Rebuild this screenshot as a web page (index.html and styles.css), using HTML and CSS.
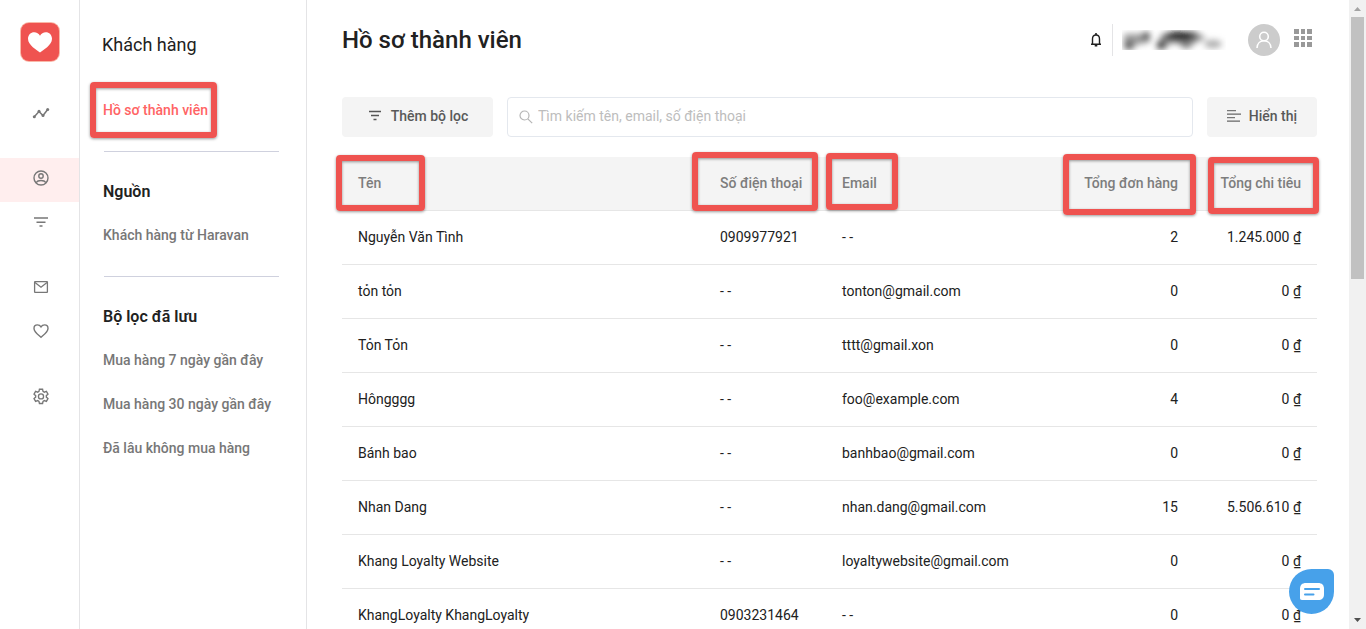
FILE: index.html
```html
<!DOCTYPE html>
<html lang="vi">
<head>
<meta charset="utf-8">
<title>Hồ sơ thành viên</title>
<link rel="stylesheet" href="styles.css">
</head>
<body>
<div class="app">
  <nav class="rail" aria-label="Ứng dụng">
    <a class="logo" href="#" aria-label="Trang chủ">
      <svg width="24" height="21" viewBox="0 0 24 21"><path d="M12 20.500C9 18 0 13.500 0 6.800 0 3 2.800.3 6.200.3c2.400 0 4.700 1.300 5.800 3.500C13.100 1.600 15.400.3 17.800.3 21.200.3 24 3 24 6.800c0 6.700-9 11.200-12 13.700z" fill="#fff"/></svg>
    </a>
    <a class="rail-item" href="#" aria-label="Tổng quan">
      <svg width="18" height="18" viewBox="0 0 18 18" fill="none" stroke="#777" stroke-width="1.500"><path d="M2.500 12.500 7 7.500l4 4 4.700-6"/><g fill="#777" stroke="none"><circle cx="2.300" cy="12.700" r="1.500"/><circle cx="7" cy="7.200" r="1.500"/><circle cx="11" cy="11.500" r="1.500"/><circle cx="15.700" cy="5.500" r="1.500"/></g></svg>
    </a>
    <a class="rail-item active gap" href="#" aria-label="Khách hàng">
      <svg width="18" height="18" viewBox="0 0 18 18" fill="none" stroke="#777" stroke-width="1.400"><circle cx="9" cy="9" r="7"/><circle cx="9" cy="7" r="2.200"/><path d="M4 13.700c1.200-1.700 3-2.200 5-2.200s3.800.5 5 2.200"/></svg>
    </a>
    <a class="rail-item" href="#" aria-label="Bộ lọc">
      <svg width="18" height="18" viewBox="0 0 18 18" stroke="#777" stroke-width="1.400"><path d="M2 5h14M4.500 9.200h9M7.500 13h3"/></svg>
    </a>
    <a class="rail-item gap" href="#" aria-label="Tin nhắn">
      <svg width="18" height="18" viewBox="0 0 18 18" fill="none" stroke="#777" stroke-width="1.300"><rect x="2.600" y="3.600" width="12.800" height="10.800" rx=".5"/><path d="m3 4.500 6 4.700 6-4.700"/></svg>
    </a>
    <a class="rail-item" href="#" aria-label="Yêu thích">
      <svg width="18" height="18" viewBox="0 0 18 18" fill="none" stroke="#777" stroke-width="1.400"><path d="M9 15.300C5.500 12.200 2 9.700 2 6.400 2 4.300 3.600 2.900 5.400 2.900c1.500 0 2.800.7 3.600 2 .8-1.300 2.100-2 3.600-2C14.400 2.900 16 4.300 16 6.400c0 3.300-3.500 5.800-7 8.900z"/></svg>
    </a>
    <a class="rail-item gap" href="#" aria-label="Cài đặt">
      <svg width="18" height="18" viewBox="0 0 24 24" fill="none" stroke="#777" stroke-width="1.800"><path d="M9.900 3h4.200l.6 2.900 1.700 1 2.800-1 2.100 3.700-2.200 1.900v2l2.200 1.900-2.100 3.700-2.800-1-1.700 1-.6 2.900H9.900l-.6-2.900-1.700-1-2.800 1-2.100-3.700 2.200-1.900v-2L2.700 9.600l2.100-3.700 2.800 1 1.700-1z"/><circle cx="12" cy="12.500" r="3.400"/></svg>
    </a>
  </nav>

  <nav class="subnav" aria-label="Khách hàng">
    <h2 class="subnav-title">Khách hàng</h2>
    <a class="subnav-link current" href="#">Hồ sơ thành viên<span class="mark mark-nav"></span></a>
    <hr class="rule">
    <h3 class="subnav-heading">Nguồn</h3>
    <a class="subnav-link" href="#">Khách hàng từ Haravan</a>
    <hr class="rule">
    <h3 class="subnav-heading">Bộ lọc đã lưu</h3>
    <a class="subnav-link" href="#">Mua hàng 7 ngày gần đây</a>
    <a class="subnav-link" href="#">Mua hàng 30 ngày gần đây</a>
    <a class="subnav-link" href="#">Đã lâu không mua hàng</a>
  </nav>

  <main class="main">
    <header class="topbar">
      <h1 class="page-title">Hồ sơ thành viên</h1>
      <div class="account">
        <button class="icon-button bell" type="button" aria-label="Thông báo">
          <svg width="12" height="14" viewBox="0 0 12 14"><path d="M1 11.200h10M2.500 11V6c0-2.500 1.300-4 3.500-4s3.500 1.500 3.500 4v5" fill="none" stroke="#212121" stroke-width="1.400"/><path d="M5.200 0h1.600v2H5.200zM4.700 12h2.600v1.500H4.700z" fill="#212121"/></svg>
        </button>
        <div class="user-name">
          <svg width="104" height="20" viewBox="0 0 104 20" aria-hidden="true"><defs><filter id="soft" x="-20%" y="-50%" width="140%" height="200%"><feGaussianBlur stdDeviation="3"/></filter></defs><g filter="url(#soft)"><path d="M2 4h26v8l-14 3-4 5H2z" fill="#999"/><circle cx="7" cy="15" r="4" fill="#555"/><circle cx="24" cy="6" r="4" fill="#555"/><path d="M34 18 40 4l32-3 12 7-10 4-8 7-9-5-8-1-8 7z" fill="#888"/><ellipse cx="58" cy="6" rx="16" ry="4" fill="#000"/><circle cx="39" cy="15" r="4" fill="#333"/><circle cx="63" cy="14" r="4" fill="#777"/><ellipse cx="91" cy="14" rx="9" ry="4" fill="#aaa"/></g></svg>
        </div>
        <button class="avatar" type="button" aria-label="Tài khoản">
          <svg width="18" height="18" viewBox="0 0 18 18" fill="none" stroke="#fff" stroke-width="1.600"><circle cx="9" cy="5.500" r="4.300"/><path d="M2 17c.2-4.400 3-7.200 7-7.200s6.800 2.800 7 7.200"/></svg>
        </button>
        <button class="icon-button apps" type="button" aria-label="Ứng dụng khác">
          <svg width="18" height="18" viewBox="0 0 18 18" fill="#999"><path d="M0 0h5v5H0zM7 0h4v5H7zM13 0h5v5h-5zM0 7h5v4H0zM7 7h4v4H7zM13 7h5v4h-5zM0 13h5v5H0zM7 13h4v5H7zM13 13h5v5h-5z"/></svg>
        </button>
      </div>
    </header>

    <div class="toolbar">
      <button class="button button-filter" type="button">
        <svg width="16" height="14" viewBox="0 0 16 14" stroke="#555" stroke-width="1.300"><path d="M2 2.500h12M4 6.500h8M6.500 10.500h3"/></svg>
        Thêm bộ lọc
      </button>
      <label class="search">
        <svg width="14" height="14" viewBox="0 0 14 14" fill="none" stroke="#b5b5b5" stroke-width="1.200"><circle cx="5.500" cy="5.500" r="4.500"/><path d="m8.800 8.800 4.400 4.400"/></svg>
        <input class="search-input" type="text" placeholder="Tìm kiếm tên, email, số điện thoại" aria-label="Tìm kiếm">
      </label>
      <button class="button button-view" type="button">
        <svg width="14" height="12" viewBox="0 0 14 12" stroke-width="1.300"><path d="M0 .7h9M0 7.700h8" stroke="#777"/><path d="M0 4.200h14M0 11.200h13" stroke="#666"/></svg>
        Hiển thị
      </button>
    </div>

    <table class="members">
      <thead>
        <tr>
          <th class="name">Tên<span class="mark mark-name"></span></th>
          <th class="phone">Số điện thoại<span class="mark mark-phone"></span></th>
          <th class="email">Email<span class="mark mark-email"></span></th>
          <th class="orders">Tổng đơn hàng<span class="mark mark-orders"></span></th>
          <th class="total">Tổng chi tiêu<span class="mark mark-total"></span></th>
        </tr>
      </thead>
      <tbody>
        <tr><td>Nguyễn Văn Tình</td><td>0909977921</td><td>- -</td><td class="num">2</td><td class="num">1.245.000 ₫</td></tr>
        <tr><td>tỏn tỏn</td><td>- -</td><td>tonton@gmail.com</td><td class="num">0</td><td class="num">0 ₫</td></tr>
        <tr><td>Tỏn Tỏn</td><td>- -</td><td>tttt@gmail.xon</td><td class="num">0</td><td class="num">0 ₫</td></tr>
        <tr><td>Hôngggg</td><td>- -</td><td>foo@example.com</td><td class="num">4</td><td class="num">0 ₫</td></tr>
        <tr><td>Bánh bao</td><td>- -</td><td>banhbao@gmail.com</td><td class="num">0</td><td class="num">0 ₫</td></tr>
        <tr><td>Nhan Dang</td><td>- -</td><td>nhan.dang@gmail.com</td><td class="num">15</td><td class="num">5.506.610 ₫</td></tr>
        <tr><td>Khang Loyalty Website</td><td>- -</td><td>loyaltywebsite@gmail.com</td><td class="num">0</td><td class="num">0 ₫</td></tr>
        <tr><td>KhangLoyalty KhangLoyalty</td><td>0903231464</td><td>- -</td><td class="num">0</td><td class="num">0 ₫</td></tr>
      </tbody>
    </table>
  </main>

  <div class="scrollbar" aria-hidden="true">
    <svg class="scroll-arrow" width="17" height="17" viewBox="0 0 17 17"><path d="M5 11h7L8.500 7z" fill="#a3a3a3"/></svg>
    <div class="scroll-track"><div class="scroll-thumb"></div></div>
    <svg class="scroll-arrow" width="17" height="17" viewBox="0 0 17 17"><path d="M5 6h7l-3.500 4z" fill="#505050"/></svg>
  </div>
</div>

<button class="chat" type="button" aria-label="Trò chuyện">
  <svg width="24" height="18" viewBox="0 0 24 18"><path d="M6 0h12c4 0 6 2 6 6v5c0 4-2 6-6 6H2c-1.500 0-2-.8-2-2V6c0-4 2-6 6-6z" fill="#fff"/><path d="M5 6h14M5 11.500h8.500" stroke="#47a1ea" stroke-width="2" stroke-linecap="round"/></svg>
</button>
</body>
</html>
```

FILE: styles.css
```css
* {
  box-sizing: border-box;
}

body {
  margin: 0;
  background: #fff;
  color: #212121;
  font: 14px/20px Roboto, "Noto Sans", sans-serif;
}

button,
input {
  font: inherit;
}

button {
  padding: 0;
  border: 0;
  background: none;
}

a {
  color: inherit;
  text-decoration: none;
}

.app {
  display: flex;
  height: 100vh;
  overflow: hidden;
}

/* Icon rail */
.rail {
  flex: none;
  width: 80px;
  padding-top: 23px;
  border-right: 1px solid #e4e4e6;
}

.logo {
  display: flex;
  align-items: center;
  justify-content: center;
  width: 38px;
  height: 38px;
  margin: 0 auto 32px 21px;
  border-radius: 8px;
  background: #ef5350;
  box-shadow: 0 0 0 1px #f9b8a8;
}

.rail-item {
  display: flex;
  align-items: center;
  justify-content: center;
  height: 44px;
  padding: 0 0 4px 3px;
}

.rail-item.gap {
  margin-top: 21px;
}

.rail-item.active {
  background: #ffeeee;
}

/* Section navigation */
.subnav {
  flex: none;
  width: 227px;
  padding: 23px 27px 0 23px;
  border-right: 1px solid #e4e4e6;
}

.subnav-title {
  margin: 0 0 21px -1px;
  font-size: 18px;
  font-weight: 400;
  line-height: 44px;
}

.subnav-heading {
  margin: 0;
  padding-top: 2px;
  font-size: 16px;
  font-weight: 600;
  line-height: 42px;
}

.subnav-link {
  display: block;
  position: relative;
  color: #777;
  font-weight: 500;
  line-height: 44px;
  white-space: nowrap;
}

.subnav-link.current {
  color: #ff6464;
}

.rule {
  height: 1px;
  margin: 19px 0 17px 1px;
  border: 0;
  background: #cfd1de;
}

/* Main column */
.main {
  flex: 1;
  min-width: 0;
  padding: 24px 32px 0 35px;
}

.topbar {
  display: flex;
  align-items: center;
  justify-content: space-between;
  height: 32px;
  margin-bottom: 41px;
}

.page-title {
  margin: 0;
  font-size: 24px;
  font-weight: 500;
  line-height: 32px;
}

.account {
  display: flex;
  align-items: center;
  height: 32px;
  padding-right: 5px;
}

.icon-button {
  display: flex;
}

.apps {
  padding-bottom: 4px;
}

.bell {
  padding-right: 10px;
}

.user-name {
  display: flex;
  align-items: center;
  height: 32px;
  padding: 0 22px 0 9px;
  border-left: 1px solid #e4e4e6;
}

.avatar {
  display: flex;
  align-items: center;
  justify-content: center;
  width: 32px;
  height: 32px;
  margin-right: 14px;
  border-radius: 50%;
  background: #ccc;
}

.toolbar {
  display: flex;
  gap: 14px;
  height: 40px;
  margin-bottom: 20px;
}

.button {
  display: flex;
  align-items: center;
  justify-content: center;
  gap: 8px;
  flex: none;
  padding-bottom: 2px;
  border-radius: 4px;
  background: #f4f4f4;
  color: #595959;
  font-weight: 500;
}

.button-filter {
  width: 151px;
}

.button-view {
  width: 110px;
}

.search {
  display: flex;
  align-items: center;
  gap: 5px;
  flex: 1;
  padding: 0 11px;
  border: 1px solid #e4e8ee;
  border-radius: 4px;
}

.search-input {
  flex: 1;
  min-width: 0;
  padding: 0 0 2px;
  border: 0;
  outline: 0;
}

.search-input::placeholder {
  color: #bdbdbd;
}

/* Member table */
.members {
  width: 100%;
  table-layout: fixed;
  border-collapse: separate;
  border-spacing: 0;
}

.members th,
.members td {
  height: 54px;
  padding: 0 16px 2px;
  border-bottom: 1px solid #e6e6e6;
  text-align: left;
  white-space: nowrap;
}

.members th {
  position: relative;
  background: #f4f4f4;
  color: #7d7d7d;
  font-weight: 500;
}

.members .phone {
  width: 122px;
}

.members .email {
  width: 238px;
}

.members .orders {
  z-index: 1;
  width: 130px;
  text-align: right;
}

.members .total {
  width: 123px;
  text-align: right;
}

.members .num {
  text-align: right;
}

/* Callout frames laid over the labels */
.mark {
  position: absolute;
  border: 6px solid #ef5350;
  border-radius: 4px;
  box-shadow: 0 1px 3px rgba(0, 0, 0, 0.4), inset 0 1px 3px rgba(0, 0, 0, 0.4);
  pointer-events: none;
}

.mark-nav {
  inset: -6px auto -6px -13px;
  width: 127px;
}

.mark-name {
  inset: -2px auto -1px -6px;
  width: 89px;
}

.mark-phone {
  inset: -5px auto -1px -12px;
  width: 126px;
}

.mark-email {
  inset: -4px auto 0 0;
  width: 72px;
}

.mark-orders {
  inset: -3px -2px -5px -1px;
}

.mark-total {
  inset: 0 -2px -4px 14px;
}

/* Page scrollbar */
.scrollbar {
  display: flex;
  flex-direction: column;
  flex: none;
  width: 17px;
  background: #f1f1f1;
}

.scroll-arrow {
  display: block;
  flex: none;
}

.scroll-track {
  flex: 1;
  padding: 0 2px;
}

.scroll-thumb {
  height: 44%;
  background: #c1c1c1;
}

/* Chat launcher */
.chat {
  display: flex;
  align-items: center;
  justify-content: center;
  position: fixed;
  right: 32px;
  bottom: 15px;
  width: 45px;
  height: 45px;
  border-radius: 50% 6px 50% 50%;
  background: #47a1ea;
}
```
